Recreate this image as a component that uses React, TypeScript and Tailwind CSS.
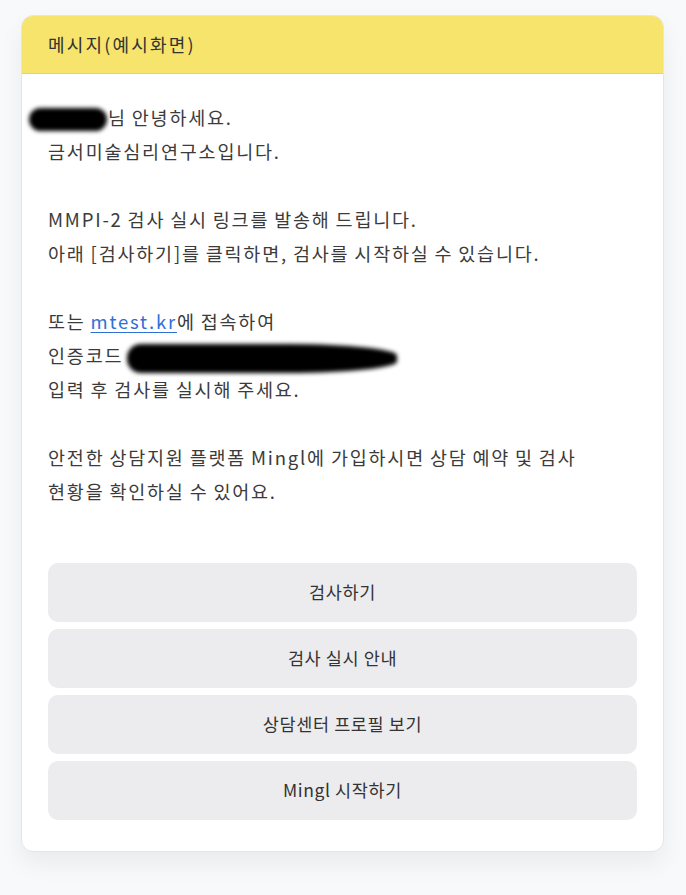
import React from "react";

const font = { fontFamily: '"Noto Sans CJK KR", "Noto Sans", sans-serif' };

function Redacted({ width, className }: { width: number; className: string }) {
  // blurred marker over personal info
  return (
    <span className="relative inline-block align-middle h-[20px]" style={{ width }}>
      <span className={`absolute bg-black rounded-full blur-[2px] ${className}`} />
    </span>
  );
}

const buttons = ["검사하기", "검사 실시 안내", "상담센터 프로필 보기", "Mingl 시작하기"];

export default function App() {
  return (
    <div className="min-h-[895px] w-[686px] bg-[#f8f9fb] pt-[15px]" style={font}>
      <div className="mx-[21px] w-[643px] rounded-[12px] border border-[#e4e5e8] bg-white overflow-hidden shadow-[0_12px_24px_rgba(0,0,0,0.06)]">
        <div className="h-[58px] bg-[#f6e46c] border-b border-[#e9d659] px-[26px] flex items-center text-[18px] tracking-[2.2px] text-[#333]">
          메시지(예시화면)
        </div>

        <div className="px-[26px] pt-[26px] pb-[31px]">
          <div className="text-[18.5px] leading-[34px] tracking-[1.8px] [word-spacing:-1px] text-[#3b3b3b]">
            <div>
              <Redacted width={60} className="left-[-19px] -top-[2px] w-[78px] h-[23px]" />
              님 안녕하세요.
            </div>
            <div>금서미술심리연구소입니다.</div>
            <div className="h-[34px]" />
            <div>MMPI-2 검사 실시 링크를 발송해 드립니다.</div>
            <div>아래 [검사하기]를 클릭하면, 검사를 시작하실 수 있습니다.</div>
            <div className="h-[34px]" />
            <div>
              또는 <span className="text-[#2f6fd6] underline underline-offset-[3px]">mtest.kr</span>에 접속하여
            </div>
            <div>
              인증코드
              <Redacted width={272} className="left-[4px] -top-[4px] w-[270px] h-[29px] rounded-l-[14px] rounded-r-[40%]" />
            </div>
            <div>입력 후 검사를 실시해 주세요.</div>
            <div className="h-[34px]" />
            <div>안전한 상담지원 플랫폼 Mingl에 가입하시면 상담 예약 및 검사</div>
            <div>현황을 확인하실 수 있어요.</div>
          </div>

          <div className="mt-[55px] flex flex-col gap-[7px]">
            {buttons.map((label) => (
              <button
                key={label}
                className="h-[59px] w-full rounded-[10px] bg-[#ececee] text-[17.5px] tracking-[0.6px] text-[#333]"
                style={font}
              >
                {label}
              </button>
            ))}
          </div>
        </div>
      </div>
    </div>
  );
}
